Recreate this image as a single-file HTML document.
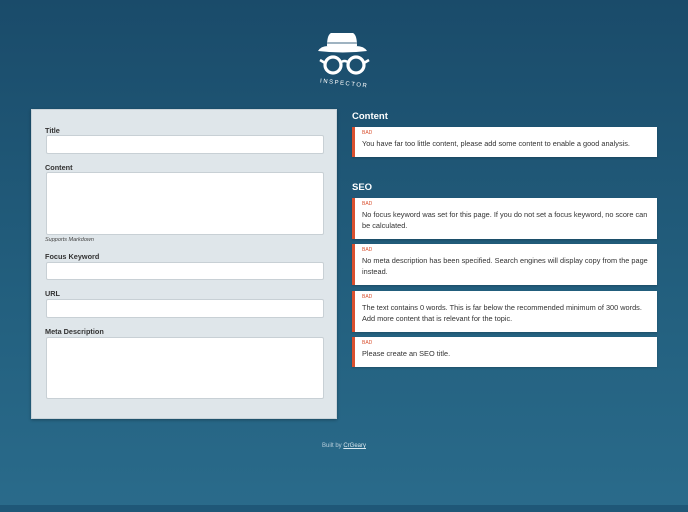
<!DOCTYPE html>
<html><head><style>
*{box-sizing:border-box;margin:0;padding:0}
body{width:688px;height:512px;overflow:hidden;font-family:"Liberation Sans",sans-serif;background:linear-gradient(#1a4b6a,#23607f 60%,#2a6b8b);position:relative}
.bar{position:absolute;left:0;right:0;bottom:0;height:7px;background:#1f5777}
.logo{position:absolute;left:315px;top:30px}
.form{position:absolute;left:31px;top:109px;width:306px;height:310px;background:#dfe6ea;border:1px solid #c9d3d9;box-shadow:0 1px 3px rgba(0,0,0,.3)}
.lab{position:absolute;left:13px;font-size:7.3px;font-weight:bold;color:#333}
.inp{position:absolute;left:14px;width:278px;background:#fff;border:1px solid #c8d0d5;border-radius:2px}
.note{position:absolute;left:13px;font-size:5.5px;font-style:italic;color:#444}
h3{position:absolute;left:352px;font-size:9.5px;color:#fff}
.card{position:absolute;left:352px;width:305px;background:#fff;border-left:3px solid #d9502f;padding:3px 6px 0 7px;box-shadow:0 1px 2px rgba(0,0,0,.2)}
.card b{display:block;font-size:5px;color:#d9502f;font-weight:normal;margin-bottom:2px}
.card p{font-size:7.35px;color:#333;line-height:11px}
.foot{position:absolute;left:0;width:688px;top:443px;text-align:center;font-size:6px;color:#b8cedb}
.foot u{color:#dbe8ef}
</style></head><body>
<svg class="logo" width="58" height="60" viewBox="0 0 58 60">
<path d="M12 16 Q12 5 16 3 L38 3 Q42 5 42 16 Z" fill="#fff"/>
<rect x="12" y="12" width="30" height="2" fill="#9fb3c1"/>
<path d="M3 21 Q6 16 13 16 L41 16 Q49 16 52 21 Q28 24 3 21Z" fill="#fff"/>
<circle cx="18" cy="35" r="8" fill="none" stroke="#fff" stroke-width="3.2"/>
<circle cx="41" cy="35" r="8" fill="none" stroke="#fff" stroke-width="3.2"/>
<path d="M25 33 Q29.5 29 34 33" fill="none" stroke="#fff" stroke-width="2.5"/>
<path d="M10 33 L5 30 M49 33 L54 30" stroke="#fff" stroke-width="2.5"/>
<text x="29" y="55" text-anchor="middle" font-size="6" fill="#fff" letter-spacing="1.5" font-family="Liberation Sans" transform="rotate(6 29 55)">INSPECTOR</text>
</svg>
<div class="form">
<div class="lab" style="top:16px">Title</div>
<div class="inp" style="top:25px;height:19px"></div>
<div class="lab" style="top:53px">Content</div>
<div class="inp" style="top:62px;height:63px"></div>
<div class="note" style="top:127px">Supports Markdown</div>
<div class="lab" style="top:142px">Focus Keyword</div>
<div class="inp" style="top:152px;height:18px"></div>
<div class="lab" style="top:179px">URL</div>
<div class="inp" style="top:189px;height:19px"></div>
<div class="lab" style="top:217px">Meta Description</div>
<div class="inp" style="top:227px;height:62px"></div>
</div>
<h3 style="top:111px">Content</h3>
<div class="card" style="top:127px;height:30px"><b>BAD</b><p>You have far too little content, please add some content to enable a good analysis.</p></div>
<h3 style="top:182px">SEO</h3>
<div class="card" style="top:198px;height:41px"><b>BAD</b><p>No focus keyword was set for this page. If you do not set a focus keyword, no score can be calculated.</p></div>
<div class="card" style="top:244px;height:41px"><b>BAD</b><p>No meta description has been specified. Search engines will display copy from the page instead.</p></div>
<div class="card" style="top:291px;height:41px"><b>BAD</b><p>The text contains 0 words. This is far below the recommended minimum of 300 words. Add more content that is relevant for the topic.</p></div>
<div class="card" style="top:337px;height:30px"><b>BAD</b><p>Please create an SEO title.</p></div>
<div class="foot">Built by <u>CrGeary</u></div>
<div class="bar"></div>
</body></html>
